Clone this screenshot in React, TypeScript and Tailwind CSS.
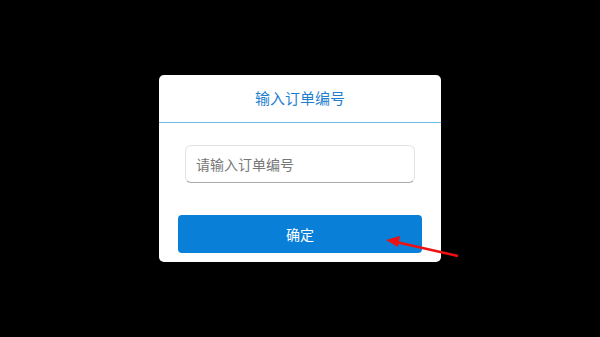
import React from 'react';

export default function App() {
  return (
    <div
      className="relative w-[600px] h-[337px] bg-black overflow-hidden"
      style={{ fontFamily: '"Noto Sans CJK SC", "Noto Sans", sans-serif' }}
    >
      <div className="absolute left-[159px] top-[75px] w-[282px] h-[187px] bg-white rounded-[5px] flex flex-col">
        <div className="h-[47px] flex items-center justify-center text-[15px] text-[#1f7fcf]">
          输入订单编号
        </div>
        <div className="h-px bg-[#6cbcea]" />
        <div className="px-[26px] pt-[22px]">
          <div className="h-[38px] rounded-[6px] border border-[#e2e2e2] border-b-[#a8a8a8] flex items-center px-[10px] text-[14px] text-[#777]">
            请输入订单编号
          </div>
        </div>
        <div className="px-[19px] pt-[32px]">
          <button className="w-full h-[38px] rounded-[4px] bg-[#0a7fd8] text-white text-[14px] flex items-center justify-center">
            确定
          </button>
        </div>
      </div>
      <svg className="absolute left-0 top-0" width="600" height="337">
        <line x1="458" y1="256" x2="396" y2="242" stroke="#ee1111" strokeWidth="2.5" />
        <polygon points="386,240 400,236 398,247" fill="#ee1111" />
      </svg>
    </div>
  );
}
